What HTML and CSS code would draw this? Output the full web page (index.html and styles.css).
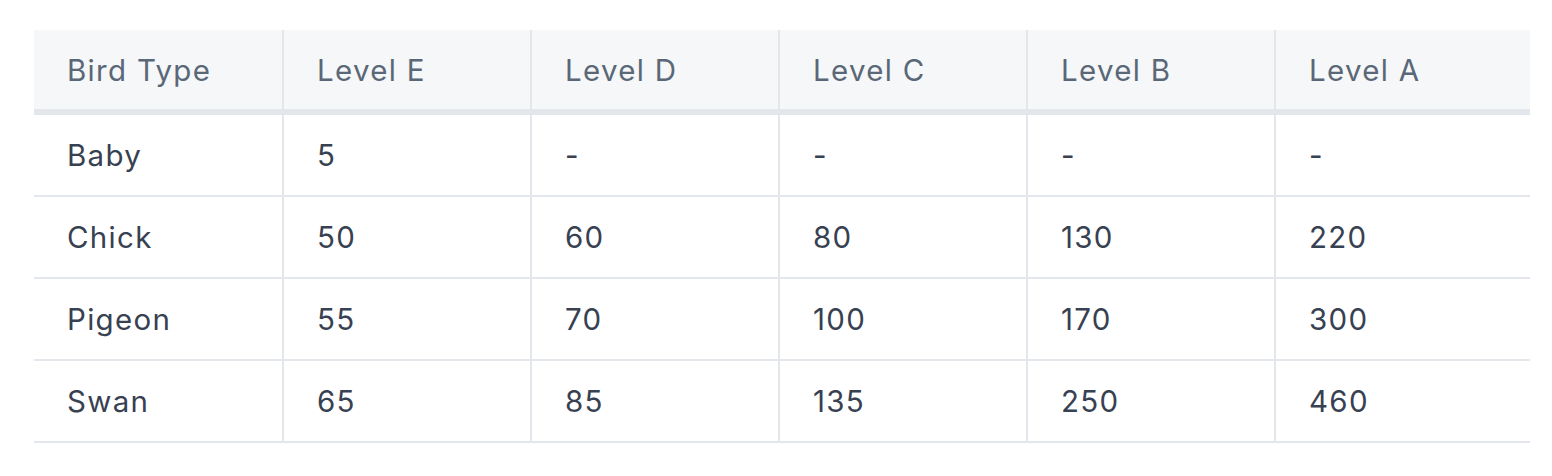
FILE: index.html
```html
<!DOCTYPE html>
<html>
<head>
<meta charset="utf-8">
<link rel="stylesheet" href="styles.css">
</head>
<body>
<div class="wrap">
<table class="levels">
<colgroup>
<col class="c-first"><col class="c-mid"><col class="c-mid"><col class="c-mid"><col class="c-mid"><col class="c-last">
</colgroup>
<thead>
<tr><th>Bird Type</th><th>Level E</th><th>Level D</th><th>Level C</th><th>Level B</th><th>Level A</th></tr>
</thead>
<tbody>
<tr><td>Baby</td><td>5</td><td>-</td><td>-</td><td>-</td><td>-</td></tr>
<tr><td>Chick</td><td>50</td><td>60</td><td>80</td><td>130</td><td>220</td></tr>
<tr><td>Pigeon</td><td>55</td><td>70</td><td>100</td><td>170</td><td>300</td></tr>
<tr><td>Swan</td><td>65</td><td>85</td><td>135</td><td>250</td><td>460</td></tr>
</tbody>
</table>
</div>
</body>
</html>
```
FILE: styles.css
```css
html, body {
  margin: 0;
  padding: 0;
  background: #ffffff;
}
.wrap {
  padding: 30px 22px 0 34px;
}
.levels {
  width: 1496px;
  border-collapse: collapse;
  table-layout: fixed;
  font-family: Inter, "Noto Sans", sans-serif;
  font-size: 29.5px;
  letter-spacing: 1.3px;
}
.c-first { width: 249px; }
.c-mid { width: 248px; }
.c-last { width: 255px; }
.levels th,
.levels td {
  text-align: left;
  padding: 0 0 0 33px;
  border-left: 2px solid #e3e7ec;
  vertical-align: middle;
  white-space: nowrap;
}
.levels th:first-child,
.levels td:first-child {
  border-left: none;
}
.levels th {
  background: #f5f7f9;
  color: #5a6776;
  font-weight: 400;
  height: 79px;
  border-bottom: 6px solid #e3e7ec;
}
.levels td {
  color: #374151;
  height: 80px;
  border-bottom: 2px solid #e3e7ec;
}
```
